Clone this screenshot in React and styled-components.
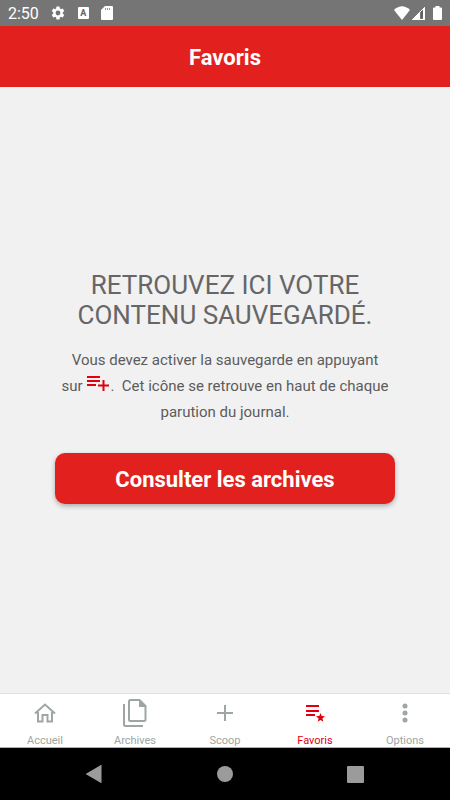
import styled, { createGlobalStyle } from "styled-components";

const TABS = [
	{ id: "home", label: "Accueil", icon: HomeIcon },
	{ id: "archives", label: "Archives", icon: ArchivesIcon },
	{ id: "scoop", label: "Scoop", icon: PlusIcon },
	{ id: "favorites", label: "Favoris", icon: ListStarIcon },
	{ id: "options", label: "Options", icon: DotsIcon },
];

export default function App() {
	return (
		<Page>
			<GlobalStyle />
			<StatusBar />
			<Header>
				<h1>Favoris</h1>
			</Header>
			<EmptyState>
				<Title>Retrouvez ici votre contenu sauvegardé.</Title>
				<Description>
					Vous devez activer la sauvegarde en appuyant{" "}
					<NoBreak>
						sur <ListPlusIcon />.&nbsp;
					</NoBreak>{" "}
					Cet icône se retrouve en haut de chaque parution du journal.
				</Description>
				<ArchivesButton type="button">Consulter les archives</ArchivesButton>
			</EmptyState>
			<TabBar>
				{TABS.map(({ id, label, icon: Icon }) => (
					<Tab
						key={id}
						type="button"
						$active={id === "favorites"}
						aria-current={id === "favorites" ? "page" : undefined}
					>
						<TabIcon>
							<Icon />
						</TabIcon>
						<span>{label}</span>
					</Tab>
				))}
			</TabBar>
			<SystemNav />
		</Page>
	);
}

function StatusBar() {
	return (
		<StatusWrapper>
			<time>2:50</time>
			<StatusIcons $gap="12px">
				<svg width="16" height="16" viewBox="0 0 24 24" fill="currentColor">
					<path d="M19.14 12.94c.04-.3.06-.61.06-.94s-.02-.64-.07-.94l2.03-1.58a.49.49 0 0 0 .12-.61l-1.92-3.32a.49.49 0 0 0-.59-.22l-2.39.96c-.5-.38-1.03-.7-1.62-.94l-.36-2.54a.48.48 0 0 0-.48-.41h-3.84a.47.47 0 0 0-.47.41l-.36 2.54c-.59.24-1.13.57-1.62.94l-2.39-.96a.48.48 0 0 0-.59.22L2.74 8.87a.47.47 0 0 0 .12.61l2.03 1.58c-.05.3-.09.63-.09.94s.02.64.07.94l-2.03 1.58a.49.49 0 0 0-.12.61l1.92 3.32c.12.22.37.29.59.22l2.39-.96c.5.38 1.03.7 1.62.94l.36 2.54c.05.24.24.41.48.41h3.84c.24 0 .44-.17.47-.41l.36-2.54c.59-.24 1.13-.56 1.62-.94l2.39.96c.22.08.47 0 .59-.22l1.92-3.32a.47.47 0 0 0-.12-.61l-2.01-1.58zM12 15.6a3.6 3.6 0 1 1 0-7.2 3.6 3.6 0 0 1 0 7.2z" />
				</svg>
				<Keyboard>A</Keyboard>
				<svg width="12" height="14" viewBox="0 0 12 14">
					<path fill="currentColor" d="M4 0h7q1 0 1 1v12q0 1-1 1H1q-1 0-1-1V4z" />
					<path stroke="#9a9a9a" strokeWidth="1" d="M4.500 2v2M6.500 2v2M8.500 2v2" />
				</svg>
			</StatusIcons>
			<StatusIcons $gap="1px" $end>
				<svg width="16" height="14" viewBox="0 0 16 14" fill="currentColor">
					<path d="M8 14 0 4Q8-3.500 16 4z" />
				</svg>
				<svg width="14" height="14" viewBox="0 0 14 14">
					<path fill="none" stroke="currentColor" d="M1.500 13.500 13.500 1.500v12z" />
					<path fill="currentColor" d="M1 14 9 6v8zM12 3l2-2v13h-2z" />
					<path fill="#616161" d="M10 5h2v7h-2z" />
				</svg>
				<svg width="16" height="14" viewBox="0 0 16 14" fill="currentColor">
					<path d="M9.500 0h4v1.500H15q1 0 1 1V13q0 1-1 1H8q-1 0-1-1V2.500q0-1 1-1h1.500z" />
				</svg>
			</StatusIcons>
		</StatusWrapper>
	);
}

function SystemNav() {
	return (
		<NavWrapper>
			<button type="button" aria-label="Retour">
				<svg width="16" height="18" viewBox="0 0 16 18" fill="currentColor">
					<path d="M15.500.3v17.400q0 .4-.5.2L.4 9.400q-.5-.4 0-.8L15 .1q.5-.2.5.2z" />
				</svg>
			</button>
			<button type="button" aria-label="Écran d’accueil">
				<svg width="16" height="16" viewBox="0 0 16 16" fill="currentColor">
					<circle cx="8" cy="8" r="8" />
				</svg>
			</button>
			<button type="button" aria-label="Applications récentes">
				<svg width="17" height="17" viewBox="0 0 17 17" fill="currentColor">
					<rect width="17" height="17" rx="1" />
				</svg>
			</button>
		</NavWrapper>
	);
}

function HomeIcon() {
	return (
		<svg width="22" height="20" viewBox="0 0 22 20" fill="none" stroke="currentColor" strokeWidth="2">
			<path d="M1 10.500 11 1.500l10 9M4 9v9.500h4.500v-6.500h5v6.500H18V9" />
		</svg>
	);
}

function ArchivesIcon() {
	return (
		<svg width="24" height="28" viewBox="0 0 24 28" fill="none" stroke="currentColor" strokeWidth="2">
			<path d="M16.500 1H7.500Q6 1 6 2.500v18Q6 22 7.500 22h13.500q1.500 0 1.500-1.500V7zM1 5v20.500Q1 27 2.500 27H20" />
			<path fill="currentColor" stroke="none" d="M16 1v7h7z" />
		</svg>
	);
}

function PlusIcon() {
	return (
		<svg width="16" height="16" viewBox="0 0 16 16" fill="none" stroke="currentColor" strokeWidth="2">
			<path d="M8 0v16M0 8h16" />
		</svg>
	);
}

function ListStarIcon() {
	return (
		<svg width="20" height="18" viewBox="0 0 20 18" fill="currentColor">
			<path d="M1 1h13v2H1zM1 6h13v2H1zM1 10h9v2H1z" />
			<path d="m15.500 9 1.200 3.100 3.300.2-2.600 2.100.9 3.300-2.800-1.800-2.800 1.800.9-3.300-2.600-2.100 3.300-.2z" />
		</svg>
	);
}

function DotsIcon() {
	return (
		<svg width="6" height="20" viewBox="0 0 6 20" fill="currentColor">
			<circle cx="3" cy="3" r="2.500" />
			<circle cx="3" cy="10" r="2.500" />
			<circle cx="3" cy="17" r="2.500" />
		</svg>
	);
}

function ListPlusIcon() {
	return (
		<InlineIcon width="24" height="16" viewBox="0 0 24 16" fill="currentColor" role="img" aria-label="sauvegarder">
			<path d="M1 1h13v2H1zM1 5h13v2H1zM1 9h9v2H1z" />
			<path d="M16.500 5h2v4.500H23v2h-4.500V16h-2v-4.500H12v-2h4.500z" />
		</InlineIcon>
	);
}

const GlobalStyle = createGlobalStyle`
	* {
		box-sizing: border-box;
	}

	body {
		margin: 0;
		font-family: Roboto, "Liberation Sans", sans-serif;
	}

	button {
		border: none;
		padding: 0;
		background: none;
		font-family: inherit;
		cursor: pointer;
	}

	svg {
		flex-shrink: 0;
	}
`

const Page = styled.div`
	display: flex;
	flex-direction: column;
	min-height: 100vh;
	background-color: #f1f1f1;
`

const StatusWrapper = styled.div`
	display: flex;
	align-items: center;
	gap: 11px;
	height: 26px;
	padding: 0 8px;
	background-color: #757575;
	color: #fff;
	font-size: 16px;
`

const StatusIcons = styled.div`
	display: flex;
	align-items: center;
	gap: ${({ $gap }) => $gap};
	margin-left: ${({ $end }) => ($end ? "auto" : "0")};
`

const Keyboard = styled.span`
	width: 11px;
	border-radius: 1px;
	background-color: #fff;
	color: #616161;
	font-size: 9px;
	font-weight: 700;
	line-height: 12px;
	text-align: center;
`

const Header = styled.header`
	display: flex;
	align-items: center;
	justify-content: center;
	height: 61px;
	padding-top: 2px;
	background-color: #e2211e;

	h1 {
		margin: 0;
		color: #fff;
		font-size: 22px;
		font-weight: 700;
	}
`

const EmptyState = styled.main`
	flex: 1;
	display: flex;
	flex-direction: column;
	align-items: center;
	justify-content: center;
	padding: 0 55px 6px;
	text-align: center;
`

const Title = styled.h2`
	margin: 0 0 17px;
	color: #666;
	font-size: 26px;
	font-weight: 400;
	line-height: 30px;
	text-transform: uppercase;
`

const Description = styled.p`
	margin: 0 0 28px;
	color: #5c5c5c;
	font-size: 15px;
	line-height: 26px;
`

const NoBreak = styled.span`
	white-space: nowrap;
`

const InlineIcon = styled.svg`
	color: #e0000f;
	vertical-align: baseline;
`

const ArchivesButton = styled.button`
	width: 100%;
	height: 51px;
	padding-top: 2px;
	border-radius: 10px;
	background-color: #e2211e;
	box-shadow: 0 2px 5px rgba(0, 0, 0, 0.3);
	color: #fff;
	font-size: 22px;
	font-weight: 700;
`

const TabBar = styled.nav`
	display: grid;
	grid-template-columns: repeat(5, 1fr);
	height: 55px;
	border-top: 1px solid #e0e0e0;
	border-bottom: 1px solid #b0b0b0;
	background-color: #fff;
`

const Tab = styled.button`
	display: flex;
	flex-direction: column;
	align-items: center;
	gap: 2px;
	color: ${({ $active }) => ($active ? "#e0000f" : "#9ea5a3")};
	font-size: 11px;
	line-height: 14px;
`

const TabIcon = styled.span`
	display: flex;
	align-items: center;
	justify-content: center;
	height: 38px;
`

const NavWrapper = styled.div`
	display: grid;
	grid-template-columns: repeat(3, 1fr);
	height: 52px;
	padding: 0 29px;
	background-color: #000;

	button {
		display: flex;
		align-items: center;
		justify-content: center;
		color: #9b9b9b;
	}
`
